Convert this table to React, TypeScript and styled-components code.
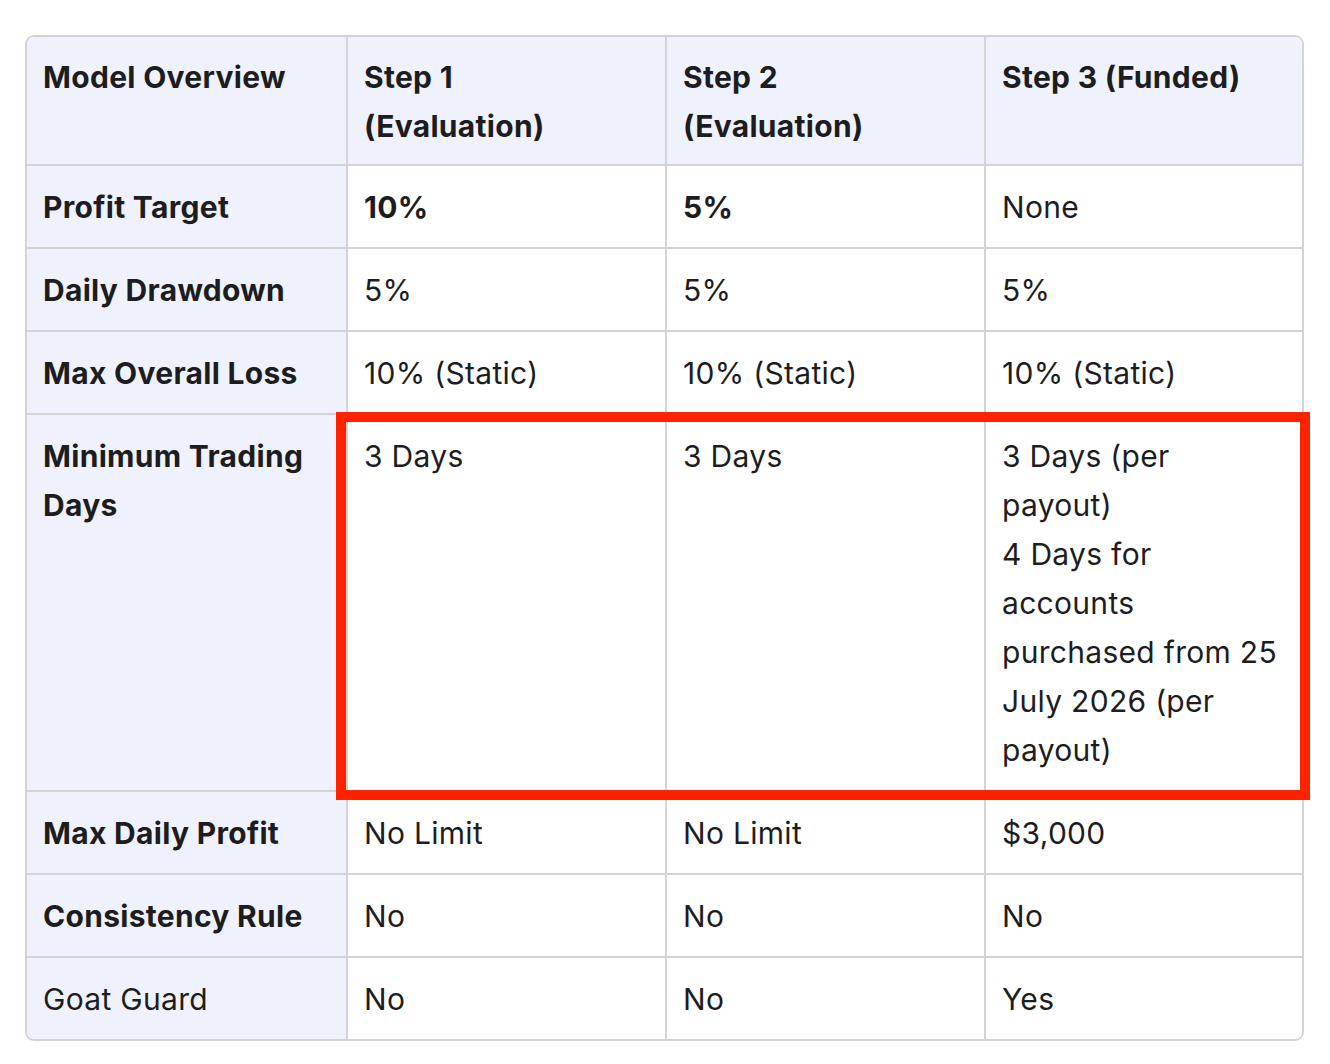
import React from 'react'
import styled, { createGlobalStyle } from 'styled-components'

const GlobalStyle = createGlobalStyle`
    html, body {
        margin: 0;
        padding: 0;
        background: #ffffff;
    }
    body {
        font-family: Inter, "Noto Sans", "Liberation Sans", sans-serif;
        color: #1d1d1f;
        -webkit-font-smoothing: antialiased;
    }
`

const Page = styled.div`
    padding: 35px 0 0 25px;
`

const TableWrap = styled.div`
    position: relative;
    width: 1279px;
`

const Table = styled.table`
    width: 100%;
    table-layout: fixed;
    border-collapse: separate;
    border-spacing: 0;
    border: 2px solid #d3d3d6;
    border-radius: 9px;
    overflow: hidden;
    font-size: 30px;
    line-height: 49px;
    letter-spacing: 0.3px;
`

const Cell = styled.td<{ $head?: boolean; $bold?: boolean; $last?: boolean; $lastRow?: boolean }>`
    padding: 17px 16px 15px 16px;
    vertical-align: top;
    text-align: left;
    font-weight: ${p => (p.$bold ? 700 : 400)};
    background: ${p => (p.$head ? '#eff2fc' : '#ffffff')};
    border-right: ${p => (p.$last ? 'none' : '2px solid #d3d3d6')};
    border-bottom: ${p => (p.$lastRow ? 'none' : '2px solid #d3d3d6')};
`

const HeadCell = styled(Cell)`
    padding-top: 16px;
    padding-bottom: 13px;
`

const Highlight = styled.div`
    position: absolute;
    left: 311px;
    top: 377px;
    width: 974px;
    height: 388px;
    box-sizing: border-box;
    border: 10px solid #ff2200;
    pointer-events: none;
`

type Row = { label: string; labelBold?: boolean; values: React.ReactNode[]; bold?: boolean[] }

const header: React.ReactNode[] = [
    'Model Overview',
    <>Step 1<br />(Evaluation)</>,
    <>Step 2<br />(Evaluation)</>,
    'Step 3 (Funded)',
]

const rows: Row[] = [
    { label: 'Profit Target', labelBold: true, values: ['10%', '5%', 'None'], bold: [true, true, false] },
    { label: 'Daily Drawdown', labelBold: true, values: ['5%', '5%', '5%'] },
    { label: 'Max Overall Loss', labelBold: true, values: ['10% (Static)', '10% (Static)', '10% (Static)'] },
    {
        label: 'Minimum Trading Days',
        labelBold: true,
        values: [
            '3 Days',
            '3 Days',
            <>
                3 Days (per payout)
                <br />
                4 Days for accounts purchased from 25 July 2026 (per payout)
            </>,
        ],
    },
    { label: 'Max Daily Profit', labelBold: true, values: ['No Limit', 'No Limit', '$3,000'] },
    { label: 'Consistency Rule', labelBold: true, values: ['No', 'No', 'No'] },
    { label: 'Goat Guard', values: ['No', 'No', 'Yes'] },
]

export default function App() {
    return (
        <Page>
            <GlobalStyle />
            <TableWrap>
                <Table>
                    <colgroup>
                        <col style={{ width: 321 }} />
                        <col style={{ width: 319 }} />
                        <col style={{ width: 319 }} />
                        <col />
                    </colgroup>
                    <thead>
                        <tr>
                            {header.map((h, i) => (
                                <HeadCell as="th" key={i} $head $bold $last={i === 3}>
                                    {h}
                                </HeadCell>
                            ))}
                        </tr>
                    </thead>
                    <tbody>
                        {rows.map((r, ri) => {
                            const lastRow = ri === rows.length - 1
                            return (
                                <tr key={r.label}>
                                    <Cell $head $bold={r.labelBold} $lastRow={lastRow}>
                                        {r.label}
                                    </Cell>
                                    {r.values.map((v, i) => (
                                        <Cell key={i} $bold={r.bold?.[i]} $last={i === 2} $lastRow={lastRow}>
                                            {v}
                                        </Cell>
                                    ))}
                                </tr>
                            )
                        })}
                    </tbody>
                </Table>
                <Highlight />
            </TableWrap>
        </Page>
    )
}
